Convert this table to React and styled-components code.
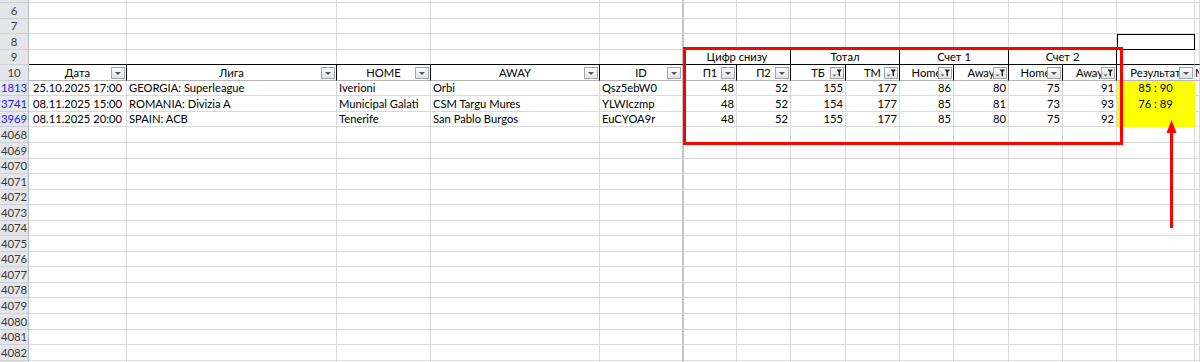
import React from "react";
import styled, { createGlobalStyle, css } from "styled-components";

const GlobalStyle = createGlobalStyle`
  html, body {
    margin: 0;
    padding: 0;
    background: #fff;
  }
  body {
    font-family: Lato, "Liberation Sans", sans-serif;
  }
`;

const GRID = "#d9dadc";
const COLS = [29, 98, 210, 94, 169, 84, 53, 54, 55, 54, 54, 55, 54, 54, 78];

const Page = styled.div`
  position: relative;
  width: 1200px;
  height: 362px;
  overflow: hidden;
`;

const Sheet = styled.div`
  display: grid;
  grid-template-columns: ${COLS.map((w) => w + "px").join(" ")} 1fr;
  grid-auto-rows: 15.55px;
  margin-top: -12.5px;
  font-size: 11.2px;
  line-height: 14px;
  color: #000;
`;

const RowHead = styled.div`
  box-sizing: border-box;
  background: #e4e6e9;
  border-right: 1px solid #b4bac2;
  border-bottom: 1px solid #cdd0d4;
  display: flex;
  align-items: flex-end;
  justify-content: center;
  font-size: 11.4px;
  letter-spacing: -0.1px;
  color: ${({ $blue }) => ($blue ? "#1c1cf5" : "#3a3a3a")};
  overflow: hidden;
`;

const Cell = styled.div`
  box-sizing: border-box;
  position: relative;
  border-right: 1px solid ${GRID};
  border-bottom: 1px solid ${GRID};
  padding: 0 2px;
  display: flex;
  align-items: flex-end;
  justify-content: ${({ $align }) =>
    $align === "right" ? "flex-end" : $align === "center" ? "center" : "flex-start"};
  white-space: nowrap;
  overflow: hidden;
  ${({ $freeze }) => $freeze && css`border-right: 2px solid #c4c4c4;`}
  ${({ $fill }) =>
    $fill &&
    css`
      background: #ffff00;
      border-color: #ffff00;
    `}
  ${({ $boxed }) => $boxed && css`outline: 1px solid #000; outline-offset: -1px;`}
`;

const GroupCell = styled(Cell)`
  grid-column: span 2;
  justify-content: center;
  border-top: 1px solid #000;
  border-right: 1px solid #000;
  border-bottom: 1px solid #000;
  margin-top: -1px;
`;

const HeadCell = styled(Cell)`
  justify-content: ${({ $start }) => ($start ? "flex-start" : "center")};
  padding: ${({ $start }) => ($start ? "0" : "0 1px")};
  border-top: 1px solid #000;
  border-right: 1px solid #000;
  border-bottom: 1px solid #b5b5b5;
  margin-top: -1px;
  ${({ $freeze }) => $freeze && css`border-right: 2px solid #c4c4c4;`}
  ${({ $soft }) => $soft && css`border-right: 1px solid ${GRID};`}
`;

const FilterBtn = styled.span`
  position: absolute;
  right: 1px;
  top: 2px;
  width: 14px;
  height: 12px;
  box-sizing: border-box;
  border: 1px solid #a3a7ad;
  background: linear-gradient(#fdfdfd, #e1e2e4);
  display: flex;
  align-items: center;
  justify-content: center;
`;

const RedFrame = styled.div`
  position: absolute;
  left: 683px;
  top: 47px;
  width: 440px;
  height: 98px;
  box-sizing: border-box;
  border: 3px solid #ff0000;
  pointer-events: none;
`;

const ArrowSvg = styled.svg`
  position: absolute;
  left: 1166px;
  top: 120px;
  pointer-events: none;
`;

const Filter = ({ funnel }) => (
  <FilterBtn>
    {funnel ? (
      <svg width="12" height="10" viewBox="0 0 12 10">
        <path d="M1.5 6.5h4l-2 2z" fill="#666" />
        <path d="M5.5 1.5h5.5l-2 2.5v4.5l-1.5-1v-3.5z" fill="#222" />
      </svg>
    ) : (
      <svg width="8" height="5" viewBox="0 0 8 5">
        <path d="M1 1h6l-3 3z" fill="#555" />
      </svg>
    )}
  </FilterBtn>
);

const data = [
  {
    n: 1813,
    date: "25.10.2025 17:00",
    league: "GEORGIA: Superleague",
    home: "Iverioni",
    away: "Orbi",
    id: "Qsz5ebW0",
    nums: [48, 52, 155, 177, 86, 80, 75, 91],
    res: "85 : 90",
  },
  {
    n: 3741,
    date: "08.11.2025 15:00",
    league: "ROMANIA: Divizia A",
    home: "Municipal Galati",
    away: "CSM Targu Mures",
    id: "YLWIczmp",
    nums: [48, 52, 154, 177, 85, 81, 73, 93],
    res: "76 : 89",
  },
  {
    n: 3969,
    date: "08.11.2025 20:00",
    league: "SPAIN: ACB",
    home: "Tenerife",
    away: "San Pablo Burgos",
    id: "EuCYOA9r",
    nums: [48, 52, 155, 177, 85, 80, 75, 92],
    res: "",
  },
];

const headers = [
  { t: "Дата" },
  { t: "Лига" },
  { t: "HOME" },
  { t: "AWAY" },
  { t: "ID", freeze: true },
  { t: "П1" },
  { t: "П2" },
  { t: "ТБ", funnel: true },
  { t: "ТМ", funnel: true },
  { t: "Home", funnel: true },
  { t: "Away", funnel: true },
  { t: "Home" },
  { t: "Away", funnel: true },
  { t: "Результат" },
];

const groups = ["Цифр снизу", "Тотал", "Счет 1", "Счет 2"];

const BlankRow = ({ n, boxed }) => (
  <>
    <RowHead>{n}</RowHead>
    {COLS.slice(1).map((_, i) => (
      <Cell key={i} $freeze={i === 4} $boxed={boxed && i === 13} />
    ))}
    <Cell />
  </>
);

const App = () => {
  const tail = [];
  for (let n = 4068; n <= 4083; n++) tail.push(n);

  return (
    <Page>
      <GlobalStyle />
      <Sheet>
        <BlankRow n={5} />
        <BlankRow n={6} />
        <BlankRow n={7} />
        <BlankRow n={8} boxed />

        <RowHead>9</RowHead>
        {[0, 1, 2, 3, 4].map((i) => (
          <Cell key={i} $freeze={i === 4} />
        ))}
        {groups.map((g) => (
          <GroupCell key={g}>{g}</GroupCell>
        ))}
        <Cell />
        <Cell />

        <RowHead>10</RowHead>
        {headers.map((h, i) => (
          <HeadCell key={i} $freeze={h.freeze} $soft={i === 13}>
            {h.t}
            <Filter funnel={h.funnel} />
          </HeadCell>
        ))}
        <HeadCell $soft $start>
          М
        </HeadCell>

        {data.map((r) => (
          <React.Fragment key={r.n}>
            <RowHead $blue>{r.n}</RowHead>
            <Cell $align="center">{r.date}</Cell>
            <Cell>{r.league}</Cell>
            <Cell>{r.home}</Cell>
            <Cell>{r.away}</Cell>
            <Cell $freeze>{r.id}</Cell>
            {r.nums.map((v, i) => (
              <Cell key={i} $align="right">
                {v}
              </Cell>
            ))}
            <Cell $align="center" $fill>
              {r.res}
            </Cell>
            <Cell />
          </React.Fragment>
        ))}

        {tail.map((n) => (
          <BlankRow key={n} n={n} />
        ))}
      </Sheet>

      <RedFrame />
      <ArrowSvg width="11" height="110" viewBox="0 0 11 110">
        <path d="M5.5 0L0.5 13h10z" fill="#ff0000" />
        <rect x="4" y="10" width="3" height="98" fill="#ff0000" />
      </ArrowSvg>
    </Page>
  );
};

export default App;
